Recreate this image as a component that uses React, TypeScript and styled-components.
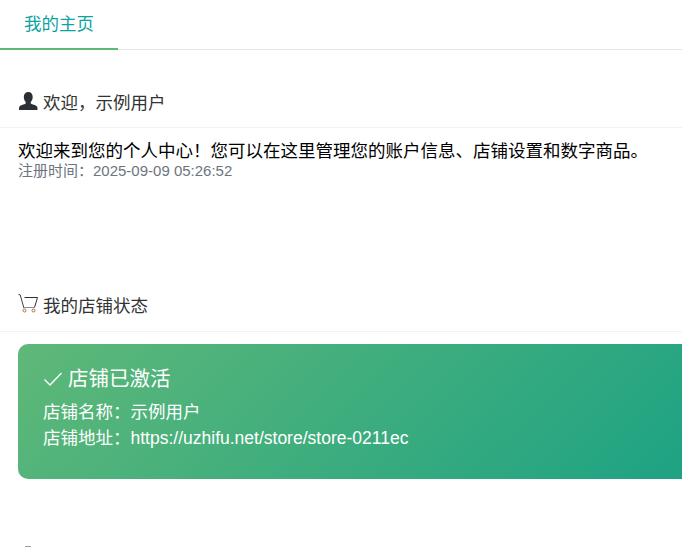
// core
import { FC } from 'react'

// libs
import styled, { createGlobalStyle } from 'styled-components'

// styles
const GlobalStyle = createGlobalStyle`
    html, body {
        margin: 0;
        padding: 0;
        height: 547px;
        overflow: hidden;
        background: #fff;
    }

    body {
        font-family: "Liberation Sans", "Noto Sans CJK SC", sans-serif;
        color: #212529;
    }
`

const Page = styled.div`
    width: 682px;
    height: 547px;
    overflow: hidden;
`

const TabBar = styled.div`
    display: flex;
    height: 49px;
    border-bottom: 1px solid #e6e6e6;
`

const Tab = styled.div`
    width: 118px;
    height: 50px;
    box-sizing: border-box;
    padding: 14px 0 0 24px;
    font-size: 17.5px;
    line-height: 20px;
    color: #0fa3a0;
    border-bottom: 2px solid #5fb878;
`

const Section = styled.section<{ $top: number }>`
    margin-top: ${({ $top }) => $top}px;
`

const SectionHeader = styled.div<{ $bottom: number }>`
    display: flex;
    align-items: center;
    gap: 5px;
    height: 34px;
    padding: 0 0 ${({ $bottom }) => $bottom}px 18px;
    font-size: 17.5px;
    color: #333;
    border-bottom: 1px solid #f2f2f2;

    svg {
        flex-shrink: 0;
    }
`

const SectionBody = styled.div`
    padding: 12px 0 0 18px;
`

const Lead = styled.p`
    margin: 0;
    font-size: 17.5px;
    line-height: 22px;
    color: #000;
    white-space: nowrap;
`

const Meta = styled.p`
    margin: 0;
    font-size: 15px;
    line-height: 18px;
    color: #6c757d;
`

const StoreCard = styled.div`
    width: 760px;
    height: 135px;
    box-sizing: border-box;
    padding: 20px 0 0 25px;
    border-radius: 10px 0 0 10px;
    background: linear-gradient(135deg, #5fb878 0%, #16a085 100%);
    color: #fff;
`

const StoreTitle = styled.div`
    display: flex;
    align-items: center;
    gap: 5px;
    font-size: 20.5px;
    line-height: 30px;
    margin-bottom: 5px;
`

const StoreLine = styled.div`
    font-size: 17.5px;
    line-height: 26px;
    white-space: nowrap;
`

// component current
const App: FC = () => {
    return (
        <Page>
            <GlobalStyle />

            <TabBar>
                <Tab>我的主页</Tab>
            </TabBar>

            <Section $top={34}>
                <SectionHeader $bottom={9}>
                    <svg width="20" height="20" viewBox="0 0 20 20">
                        <path d="M10.500 1c2.600 0 4.200 2 4.200 5 0 2.200-.9 4-1.900 4.900v1.600c1.200.9 5.200 1.700 6.200 3 .4.500.5 1.300.5 3.500H1c0-2.200.1-3 .5-3.500 1-1.300 5-2.100 6.200-3v-1.600c-1-.9-1.900-2.700-1.900-4.900 0-3 1.600-5 4.700-5z" fill="#2b2f36" />
                    </svg>
                    欢迎，示例用户
                </SectionHeader>
                <SectionBody>
                    <Lead>欢迎来到您的个人中心！您可以在这里管理您的账户信息、店铺设置和数字商品。</Lead>
                    <Meta>注册时间：2025-09-09 05:26:52</Meta>
                </SectionBody>
            </Section>

            <Section $top={107}>
                <SectionHeader $bottom={10}>
                    <svg width="20" height="20" viewBox="0 0 20 20" fill="none" stroke="#3a3f47" strokeWidth="1">
                        <path d="M.5 .5l1.700.4 3.700 13.100" />
                        <path d="M6.500 3.500h13l-3 10" stroke="#2b2f36" />
                        <path d="M5.900 13.500h10.600" stroke="#8a8d92" />
                        <circle cx="6.500" cy="16.500" r="1.500" stroke="#a8703a" />
                        <circle cx="15.500" cy="16.500" r="1.500" stroke="#a8703a" />
                    </svg>
                    我的店铺状态
                </SectionHeader>
                <SectionBody>
                    <StoreCard>
                        <StoreTitle>
                            <svg width="20" height="20" viewBox="0 0 20 20" fill="none" stroke="#fff" strokeWidth="1.400">
                                <path d="M1.500 10.500l5.500 5.500 11.500-12" />
                            </svg>
                            店铺已激活
                        </StoreTitle>
                        <StoreLine>店铺名称：示例用户</StoreLine>
                        <StoreLine>店铺地址：https://uzhifu.net/store/store-0211ec</StoreLine>
                    </StoreCard>
                </SectionBody>
            </Section>

            <Section $top={58}>
                <SectionHeader $bottom={9}>
                    <svg width="20" height="20" viewBox="0 0 20 20" fill="none" stroke="#3a3f47" strokeWidth="1">
                        <path d="M3 6h14v12H3z" />
                        <path d="M7 8V3h6v5" />
                    </svg>
                    数字商品管理
                </SectionHeader>
            </Section>
        </Page>
    )
}

export default App
